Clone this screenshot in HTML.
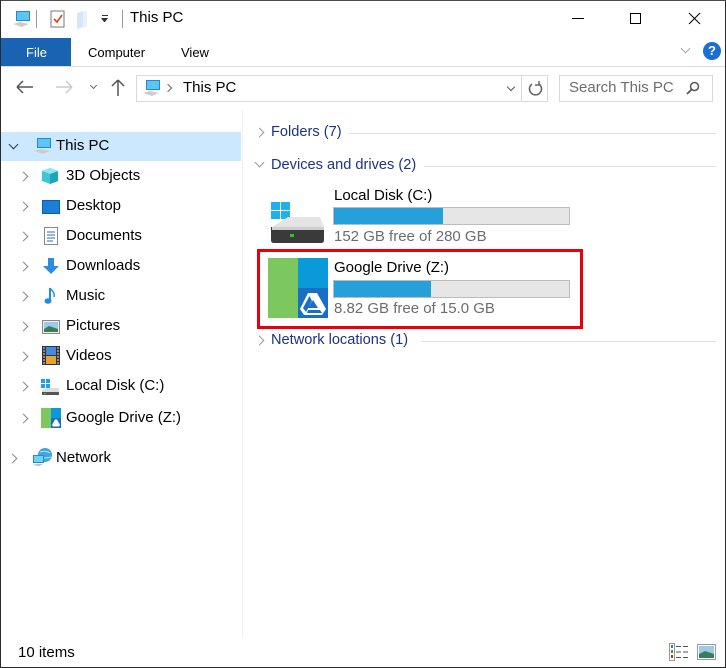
<!DOCTYPE html>
<html><head><meta charset="utf-8"><style>
*{margin:0;padding:0;box-sizing:border-box}
body{width:726px;height:668px;overflow:hidden;background:#fff;font-family:"Liberation Sans",sans-serif;font-size:15px;color:#000;position:relative}
.a{position:absolute;white-space:nowrap}
.chev{position:absolute;width:7px;height:7px;border-right:1.3px solid #888;border-bottom:1.3px solid #888}
.r{transform:rotate(-45deg)}
.d{transform:rotate(45deg)}
.hdr{color:#1e3287;font-size:14.6px}
.line{position:absolute;height:1px;background:#e2e2e2}
.bar{position:absolute;height:18px;background:#e6e6e6;border:1px solid #bcbcbc}
.bar i{position:absolute;left:0;top:0;bottom:0;background:#26a0da}
.gray{color:#6d6d6d}
</style></head><body>
<div class="a" style="left:0;top:0;width:726px;height:668px;border:1px solid #2b2b2b;border-top-color:#4a4a4a"></div>
<svg class="a" style="left:12px;top:10px" width="20" height="18" viewBox="0 0 20 18"><rect x="4" y="1" width="14" height="10" fill="#1f8ad8"/><rect x="5" y="2" width="12" height="8" fill="#5fc3f5"/><path d="M1 14 L8 12 L17 14 L10 17Z" fill="#ccc"/></svg>
<div class="a" style="left:36px;top:10px;width:1px;height:18px;background:#999"></div>
<svg class="a" style="left:50px;top:9px" width="16" height="20" viewBox="0 0 16 20"><rect x="1" y="2" width="13" height="16" fill="#fff" stroke="#777"/><path d="M4 10 L7 13 L12 6" stroke="#e0401c" stroke-width="1.6" fill="none"/></svg>
<svg class="a" style="left:77px;top:11px" width="12" height="18"><path d="M0 2 L6 0 L6 16 L0 18Z" fill="#d6e6f4"/><rect x="6" y="0" width="4" height="16" fill="#e8f0f8"/></svg>
<div class="a" style="left:101px;top:18px;width:7px;border-top:4px solid #333;border-left:3.5px solid transparent;border-right:3.5px solid transparent"></div>
<div class="a" style="left:102px;top:15px;width:6px;height:1px;background:#333"></div>
<div class="a" style="left:122px;top:10px;width:1px;height:18px;background:#999"></div>
<div class="a" style="left:130px;top:9px;font-size:15px">This PC</div>
<div class="a" style="left:572px;top:18px;width:12px;height:1px;background:#000"></div>
<div class="a" style="left:630px;top:13px;width:11px;height:11px;border:1px solid #000"></div>
<svg class="a" style="left:688px;top:12px" width="13" height="13"><path d="M1 1L12 12M12 1L1 12" stroke="#000" stroke-width="1"/></svg>
<div class="a" style="left:1px;top:38px;width:70px;height:28px;background:#1a63b3"></div>
<div class="a" style="left:26px;top:45px;color:#fff;font-size:13px">File</div>
<div class="a" style="left:88px;top:45px;font-size:13px">Computer</div>
<div class="a" style="left:181px;top:45px;font-size:13px">View</div>
<div class="chev d" style="left:682px;top:45px;border-color:#aaa"></div>
<div class="a" style="left:703px;top:42px;width:18px;height:18px;border-radius:50%;background:#1a6fd0;color:#fff;font-size:13px;font-weight:bold;text-align:center;line-height:18px">?</div>
<div class="line" style="left:1px;top:66px;width:724px;background:#dadbdc"></div>
<svg class="a" style="left:16px;top:80px" width="18" height="14"><path d="M1 7H17M1 7L7 1M1 7L7 13" stroke="#555" stroke-width="1.5" fill="none"/></svg>
<svg class="a" style="left:55px;top:80px" width="18" height="14"><path d="M1 7H17M17 7L11 1M17 7L11 13" stroke="#ccc" stroke-width="1.5" fill="none"/></svg>
<div class="chev d" style="left:91px;top:83px;width:5px;height:5px;border-color:#666"></div>
<svg class="a" style="left:111px;top:78px" width="14" height="19"><path d="M7 18V2M7 2L1 8M7 2L13 8" stroke="#555" stroke-width="1.5" fill="none"/></svg>
<div class="a" style="left:136px;top:75px;width:386px;height:27px;border:1px solid #d9d9d9"></div>
<div class="a" style="left:521px;top:75px;width:27px;height:27px;border:1px solid #d9d9d9"></div>
<svg class="a" style="left:142px;top:79px" width="20" height="18" viewBox="0 0 20 18"><rect x="4" y="1" width="14" height="10" fill="#1f8ad8"/><rect x="5" y="2" width="12" height="8" fill="#5fc3f5"/><path d="M1 14 L8 12 L17 14 L10 17Z" fill="#ccc"/></svg>
<div class="chev r" style="left:165px;top:85px;width:6px;height:6px;border-color:#666"></div>
<div class="a" style="left:183px;top:79px">This PC</div>
<div class="chev d" style="left:508px;top:84px;width:6px;height:6px;border-color:#555"></div>
<svg class="a" style="left:528px;top:80px" width="15" height="17"><path d="M11 4A6 6 0 1 1 4 4" stroke="#666" stroke-width="1.6" fill="none"/><path d="M11 1V5H7" stroke="#666" stroke-width="1.5" fill="none"/></svg>
<div class="a" style="left:559px;top:75px;width:154px;height:27px;border:1px solid #d9d9d9"></div>
<div class="a gray" style="left:569px;top:79px">Search This PC</div>
<svg class="a" style="left:686px;top:81px" width="14" height="14"><circle cx="8.5" cy="5.5" r="4" stroke="#555" stroke-width="1.5" fill="none"/><path d="M5.5 8.5L1 13" stroke="#555" stroke-width="1.8"/></svg>
<div class="a" style="left:242px;top:110px;width:1px;height:528px;background:#f0f0f0"></div>
<div class="a" style="left:1px;top:132px;width:240px;height:29px;background:#cce8ff"></div>
<div class="chev d" style="left:10px;top:141px;border-color:#333"></div>
<svg class="a" style="left:33px;top:137px" width="20" height="18" viewBox="0 0 20 18"><rect x="4" y="1" width="14" height="10" fill="#1f8ad8"/><rect x="5" y="2" width="12" height="8" fill="#5fc3f5"/><path d="M1 14 L8 12 L17 14 L10 17Z" fill="#ccc"/></svg>
<div class="a" style="left:56px;top:137px">This PC</div>
<div class="chev r" style="left:20px;top:173px"></div>
<svg class="a" style="left:41px;top:167px" width="18" height="18"><path d="M9 1L17 4V14L9 17L1 14V4Z" fill="#3cc6d8"/><path d="M9 7L17 4V14L9 17Z" fill="#1fa3b8"/><path d="M9 1L17 4L9 7L1 4Z" fill="#8ae8f0"/></svg>
<div class="a" style="left:66px;top:167px">3D Objects</div>
<div class="chev r" style="left:20px;top:203px"></div>
<div class="a" style="left:42px;top:200px;width:18px;height:14px;background:#1a7fd8;border:1px solid #0f5fa8"></div>
<div class="a" style="left:66px;top:197px">Desktop</div>
<div class="chev r" style="left:20px;top:233px"></div>
<svg class="a" style="left:44px;top:227px" width="14" height="18"><rect x="0.5" y="0.5" width="13" height="17" fill="#fff" stroke="#888"/><path d="M3 5H11M3 8H11M3 11H11M3 14H9" stroke="#2b6cc4"/></svg>
<div class="a" style="left:66px;top:227px">Documents</div>
<div class="chev r" style="left:20px;top:263px"></div>
<svg class="a" style="left:42px;top:257px" width="18" height="18"><path d="M6 1H12V9H17L9 17L1 9H6Z" fill="#2f8be0"/></svg>
<div class="a" style="left:66px;top:257px">Downloads</div>
<div class="chev r" style="left:20px;top:293px"></div>
<svg class="a" style="left:44px;top:287px" width="14" height="18"><path d="M6 1V14" stroke="#1f8ee8" stroke-width="2"/><ellipse cx="4" cy="14" rx="3.5" ry="2.8" fill="#1f8ee8"/><path d="M6 1C8 4 11 5 10 10" stroke="#1f8ee8" stroke-width="1.5" fill="none"/></svg>
<div class="a" style="left:66px;top:287px">Music</div>
<div class="chev r" style="left:20px;top:323px"></div>
<svg class="a" style="left:42px;top:320px" width="18" height="14"><rect x="0.5" y="0.5" width="17" height="13" fill="#eee" stroke="#888"/><rect x="2" y="2" width="14" height="10" fill="#9ccbe8"/><path d="M2 9L7 6L16 9V12H2Z" fill="#3b7d5a"/></svg>
<div class="a" style="left:66px;top:317px">Pictures</div>
<div class="chev r" style="left:20px;top:353px"></div>
<svg class="a" style="left:42px;top:346px" width="18" height="19"><rect width="18" height="19" fill="#333"/><rect x="4" y="1" width="10" height="8" fill="#3b8ee0"/><rect x="4" y="10" width="10" height="8" fill="#e8a030"/><path d="M1 2h2M1 5h2M1 8h2M1 11h2M1 14h2M1 17h2M15 2h2M15 5h2M15 8h2M15 11h2M15 14h2M15 17h2" stroke="#ddd"/></svg>
<div class="a" style="left:66px;top:347px">Videos</div>
<div class="chev r" style="left:20px;top:383px"></div>
<svg class="a" style="left:40px;top:378px" width="20" height="18"><rect x="1" y="1" width="4" height="4" fill="#1fa0e8"/><rect x="6" y="1" width="4" height="4" fill="#1fa0e8"/><rect x="1" y="6" width="4" height="4" fill="#1fa0e8"/><rect x="6" y="6" width="4" height="4" fill="#1fa0e8"/><path d="M2 12L6 10H19V14H2Z" fill="#ddd"/><rect x="2" y="14" width="17" height="3" fill="#555"/><rect x="4" y="15" width="2" height="1" fill="#3c3"/></svg>
<div class="a" style="left:66px;top:377px">Local Disk (C:)</div>
<div class="chev r" style="left:20px;top:415px"></div>
<div class="a" style="left:41px;top:408px;width:10px;height:20px;background:#7dc85e"></div>
<div class="a" style="left:51px;top:408px;width:10px;height:10px;background:#0a9ad9"></div>
<div class="a" style="left:51px;top:418px;width:10px;height:10px;background:#1a6fc4"></div>
<svg class="a" style="left:52px;top:419px" width="8" height="8"><path d="M3 0.5H5L8 6L7 7.5H1L0 6Z" fill="#fff"/></svg>
<div class="a" style="left:66px;top:409px">Google Drive (Z:)</div>
<div class="chev r" style="left:9px;top:455px"></div>
<svg class="a" style="left:31px;top:447px" width="22" height="20"><circle cx="14" cy="8" r="7" fill="#4aa0e0"/><path d="M9 5Q14 3 19 6M8 10Q14 12 20 10" stroke="#8fd" stroke-width="1" fill="none"/><rect x="2" y="8" width="11" height="8" fill="#1f8ad8"/><rect x="3" y="9" width="9" height="6" fill="#6fd0f8"/><path d="M1 18L6 17H12L8 19Z" fill="#bbb"/></svg>
<div class="a" style="left:56px;top:449px">Network</div>
<div class="chev r" style="left:256px;top:129px;border-color:#999"></div>
<div class="a hdr" style="left:271px;top:124px">Folders (7)</div>
<div class="line" style="left:349px;top:133px;width:367px"></div>
<div class="chev d" style="left:256px;top:159px;border-color:#999"></div>
<div class="a hdr" style="left:271px;top:157px">Devices and drives (2)</div>
<div class="line" style="left:424px;top:166px;width:292px"></div>
<svg class="a" style="left:268px;top:200px" width="58" height="44"><rect x="3" y="2" width="9" height="8" fill="#1fb0f0"/><rect x="13" y="2" width="9" height="8" fill="#1fb0f0"/><rect x="3" y="11" width="9" height="8" fill="#1fb0f0"/><rect x="13" y="11" width="9" height="8" fill="#1fb0f0"/><path d="M4 27L20 17H52L56 27Z" fill="#e4e4e4"/><path d="M3 27H56V40Q56 43 53 43H6Q3 43 3 40Z" fill="#3a3a3a"/><rect x="4" y="27" width="52" height="3" fill="#cfcfcf"/><rect x="22" y="34" width="4" height="3" fill="#2c2"/></svg>
<div class="a" style="left:334px;top:187px">Local Disk (C:)</div>
<div class="bar" style="left:333px;top:207px;width:237px"><i style="width:109px"></i></div>
<div class="a gray" style="left:334px;top:228px">152 GB free of 280 GB</div>
<div class="a" style="left:257px;top:249px;width:326px;height:80px;border:3px solid #e8000a"></div>
<div class="a" style="left:268px;top:258px;width:30px;height:60px;background:#7dc85e"></div>
<div class="a" style="left:298px;top:258px;width:30px;height:30px;background:#0a9ad9"></div>
<div class="a" style="left:298px;top:288px;width:30px;height:30px;background:#1a6fc4"></div>
<svg class="a" style="left:299px;top:291px" width="28" height="26" viewBox="0 0 28 26"><path d="M9 2H18L27 18L23 24H5L1 18Z" fill="#fff"/><path d="M10.5 5L4 17L7 21L13 10Z" fill="#1a6fc4"/><path d="M9 19H21L23 22H8Z" fill="#1a6fc4"/><path d="M14 9L19 17H9Z" fill="#1a6fc4"/></svg>
<div class="a" style="left:334px;top:259px">Google Drive (Z:)</div>
<div class="bar" style="left:333px;top:280px;width:237px"><i style="width:97px"></i></div>
<div class="a gray" style="left:334px;top:300px">8.82 GB free of 15.0 GB</div>
<div class="chev r" style="left:256px;top:337px;border-color:#999"></div>
<div class="a hdr" style="left:271px;top:332px">Network locations (1)</div>
<div class="line" style="left:421px;top:341px;width:295px"></div>
<div class="a" style="left:18px;top:644px">10 items</div>
<svg class="a" style="left:669px;top:643px" width="20" height="18"><rect x="0.5" y="0.5" width="5" height="17" fill="none" stroke="#999"/><rect x="2" y="2" width="2" height="3" fill="#1a7fd8"/><rect x="2" y="7" width="2" height="3" fill="#6a8a20"/><rect x="2" y="12" width="2" height="3" fill="#c03010"/><path d="M7 3.5h5M14 3.5h5M7 9h5M14 9h5M7 14.5h5M14 14.5h5" stroke="#555"/></svg>
<svg class="a" style="left:697px;top:644px" width="19" height="16"><rect x="0.5" y="0.5" width="18" height="15" fill="#fff" stroke="#999"/><rect x="2" y="2" width="15" height="12" fill="#9ccbe8"/><path d="M2 10L8 7L17 10V14H2Z" fill="#3b7d5a"/></svg>
</body></html>
